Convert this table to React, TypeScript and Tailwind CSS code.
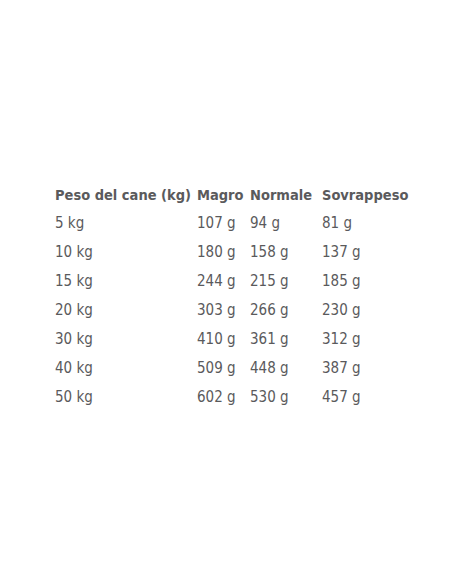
const rows = [
  ["5 kg", "107 g", "94 g", "81 g"],
  ["10 kg", "180 g", "158 g", "137 g"],
  ["15 kg", "244 g", "215 g", "185 g"],
  ["20 kg", "303 g", "266 g", "230 g"],
  ["30 kg", "410 g", "361 g", "312 g"],
  ["40 kg", "509 g", "448 g", "387 g"],
  ["50 kg", "602 g", "530 g", "457 g"],
];

const headers = ["Peso del cane (kg)", "Magro", "Normale", "Sovrappeso"];
const widths = ["w-[142px]", "w-[53px]", "w-[72px]", "w-[100px]"];

export default function App() {
  return (
    <div
      className="w-[452px] h-[584px] bg-white pt-[182px] pl-[55px] text-[#5a5a5c]"
      style={{ fontFamily: '"DejaVu Sans Condensed", "DejaVu Sans", sans-serif' }}
    >
      <div className="flex h-[27px] items-center text-[14.5px] font-bold whitespace-nowrap">
        {headers.map((h, i) => (
          <div key={h} className={widths[i]}>
            {h}
          </div>
        ))}
      </div>
      {rows.map((r) => (
        <div key={r[0]} className="flex h-[29px] items-center text-[15px] whitespace-nowrap">
          {r.map((c, i) => (
            <div key={i} className={widths[i]}>
              {c}
            </div>
          ))}
        </div>
      ))}
    </div>
  );
}
